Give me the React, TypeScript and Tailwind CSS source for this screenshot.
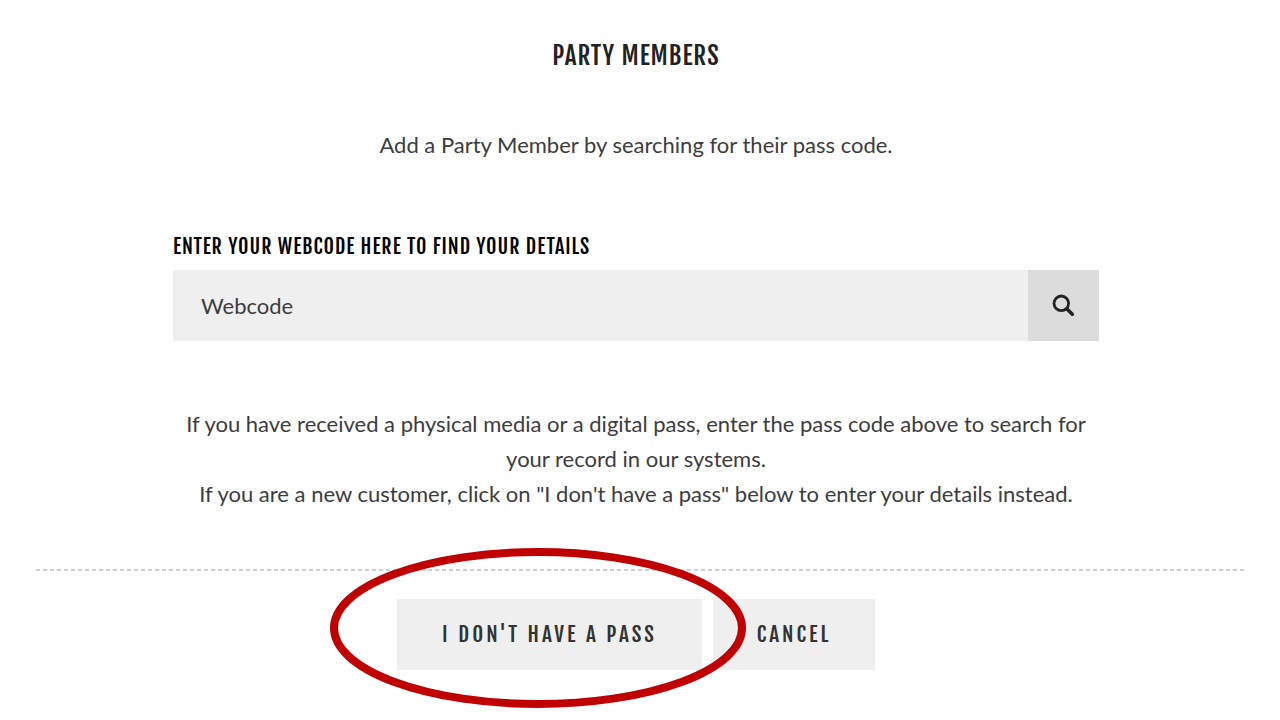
import { useState } from "react";

const heading = "font-['Fjalla_One','Liberation_Sans_Narrow','Roboto_Condensed','Open_Sans_Condensed',sans-serif]";

function SearchIcon() {
  return (
    <svg width="24" height="24" viewBox="0 0 24 24" fill="none" stroke="currentColor" aria-hidden="true">
      <circle cx="9.3" cy="9.3" r="7.3" strokeWidth="2.8" />
      <path d="M14.8 14.8L20.3 20.2" strokeWidth="3.6" strokeLinecap="round" />
    </svg>
  );
}

export default function App() {
  const [webcode, setWebcode] = useState("");

  return (
    <main className="bg-white pb-12 pr-2 font-[Lato,sans-serif] text-[22px] leading-[35px] text-[#3c3c3f]">
      <div className="mx-auto max-w-[926px] pt-9">
        <h1 className={`${heading} text-center text-[25px] leading-10 tracking-[1px] text-[#222]`}>
          PARTY MEMBERS
        </h1>
        <p className="mt-[51px] text-center">Add a Party Member by searching for their pass code.</p>

        <form className="mt-[69px]" onSubmit={(e) => e.preventDefault()}>
          <label htmlFor="webcode" className={`${heading} block text-[20px] leading-8 tracking-[1px] text-black`}>
            ENTER YOUR WEBCODE HERE TO FIND YOUR DETAILS
          </label>
          <div className="mt-[7px] flex h-[71px]">
            <input
              id="webcode"
              type="text"
              value={webcode}
              onChange={(e) => setWebcode(e.target.value)}
              placeholder="Webcode"
              className="min-w-0 flex-1 bg-[#efefef] px-7 placeholder:text-[#3c3c3f] placeholder:opacity-100"
            />
            <button
              type="submit"
              aria-label="Search"
              className="flex w-[71px] items-center justify-center bg-[#dcdcdc] text-[#222]"
            >
              <SearchIcon />
            </button>
          </div>
        </form>

        <p className="mt-[65px] text-center">
          If you have received a physical media or a digital pass, enter the pass code above to search for your
          record in our systems.
          <br />
          If you are a new customer, click on "I don't have a pass" below to enter your details instead.
        </p>
      </div>

      <div className="ml-9 mr-7 mt-[58px] h-0.5 bg-[repeating-linear-gradient(90deg,#d0d0d0_0_4px,transparent_4px_7px)]" />

      <div className={`${heading} mt-7 flex justify-center gap-[11px] text-[21px] text-[#333]`}>
        <div className="relative">
          <button type="button" className="h-[71px] w-[305px] bg-[#efefef] tracking-[3px]">
            I DON'T HAVE A PASS
          </button>
          {/* highlight ring, runs over the rule and the next button */}
          <svg
            width="416"
            height="160"
            viewBox="0 0 416 160"
            className="pointer-events-none absolute -left-[67px] -top-[51px] z-10 max-w-none"
            aria-hidden="true"
          >
            <ellipse cx="208" cy="80" rx="204" ry="76" fill="none" stroke="#c00000" strokeWidth="8" />
          </svg>
        </div>
        <button type="button" className="h-[71px] w-[162px] bg-[#efefef] tracking-[3px]">
          CANCEL
        </button>
      </div>
    </main>
  );
}
